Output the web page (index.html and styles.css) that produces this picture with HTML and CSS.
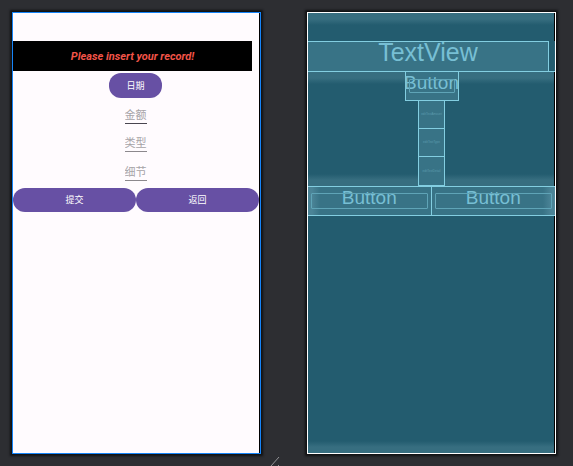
FILE: index.html
```html
<!DOCTYPE html>
<html lang="zh-CN">
<head>
<meta charset="utf-8">
<meta name="viewport" content="width=device-width, initial-scale=1">
<title>Layout editor</title>
<link rel="stylesheet" href="styles.css">
</head>
<body>
<main class="editor">
  <section class="device design" aria-label="Design">
    <h1 class="banner">Please insert your record!</h1>
    <form class="form">
      <button class="pill date" type="button">日期</button>
      <input class="field focus" type="text" placeholder="金额" aria-label="金额">
      <input class="field" type="text" placeholder="类型" aria-label="类型">
      <input class="field" type="text" placeholder="细节" aria-label="细节">
    </form>
    <div class="actions">
      <button class="pill" type="button">提交</button>
      <button class="pill" type="button">返回</button>
    </div>
  </section>
  <section class="device blueprint" aria-label="Blueprint">
    <div class="top-space"></div>
    <div class="banner-row"><div class="bp-title">TextView</div></div>
    <div class="bp-form">
      <div class="bp-button bp-date"><span>Button</span></div>
      <div class="bp-field">editTextAmount</div>
      <div class="bp-field">editTextType</div>
      <div class="bp-field">editTextDetail</div>
    </div>
    <div class="bp-actions">
      <div class="bp-button"><span>Button</span></div>
      <div class="bp-button"><span>Button</span></div>
    </div>
    <div class="bp-rest"></div>
  </section>
  <svg class="grip" viewBox="0 0 10 9" aria-hidden="true"><path d="M1 9L9 0M8 9L9 8"/></svg>
</main>
</body>
</html>
```
FILE: styles.css
```css
* { box-sizing: border-box; }

body {
  margin: 0;
  background: #2d2e32;
  font-family: Roboto, "Noto Sans CJK SC", sans-serif;
}

.editor {
  position: relative;
  display: grid;
  grid-template-columns: 1fr 1fr;
  gap: 46px;
  min-height: 100vh;
  padding: 12px 17px 12px 12px;
}

.device {
  display: flex;
  flex-direction: column;
  min-width: 0;
  box-shadow: 0 0 2px 2px #111214;
}

.design {
  padding-top: 28px;
  border: 1px solid #1684f8;
  background: linear-gradient(#000, #000) right / 1px 100% no-repeat, #fffbfe;
}

.banner {
  height: 30px;
  margin: 0 8px 0 0;
  background: #000;
  color: #f25448;
  font-size: 11px;
  font-style: italic;
  font-weight: 700;
  line-height: 31px;
  text-align: center;
}

.form {
  display: flex;
  flex-direction: column;
  align-items: center;
  padding: 2px 2px 0 0;
}

.pill {
  height: 24px;
  padding: 0;
  border: 0;
  border-radius: 12px;
  background: #6750a4;
  color: #fff;
  font: 400 9px/24px Roboto, "Noto Sans CJK SC", sans-serif;
}

.date {
  width: 53px;
  height: 25px;
  margin-bottom: 7px;
}

.field {
  width: 22px;
  height: 19px;
  margin-bottom: 9px;
  padding: 2px 0 0;
  border: 0;
  border-bottom: 1px solid #8c888d;
  outline: 0;
  background: none;
  color: #49454f;
  font: 11px/16px Roboto, "Noto Sans CJK SC", sans-serif;
}

.field::placeholder { color: #a6a3a7; opacity: 1; }
.focus { border-color: #49454f; }
.field:last-child { height: 20px; margin-bottom: 7px; padding-top: 3px; }

.actions {
  display: grid;
  grid-template-columns: 1fr 1fr;
  margin-right: 1px;
}

.blueprint {
  border: 1px solid #fff;
  background: #235c6f;
  color: #77bfd4;
  font-family: "Liberation Sans", sans-serif;
}

.top-space,
.bp-form,
.bp-rest {
  border-right: 1px solid #000;
}

.top-space {
  height: 28px;
  background: linear-gradient(#376e80 6px, #235c6f 12px);
}

.banner-row {
  height: 31px;
  border-bottom: 1px solid #83cee1;
}

.bp-title {
  height: 30px;
  margin-right: 6px;
  border: solid #83cee1;
  border-width: 1px 1px 0 0;
  background: #387386;
  font-size: 25px;
  line-height: 20px;
  text-align: center;
}

.bp-form {
  display: flex;
  flex-direction: column;
  align-items: center;
  padding-left: 1px;
  background: linear-gradient(#376e80 6px, #235c6f 12px, #235c6f calc(100% - 12px), #376e80 calc(100% - 6px));
}

.bp-button {
  position: relative;
  height: 30px;
  border: 1px solid #83cee1;
  border-top: 0;
  background: #387386;
  font-size: 19px;
  line-height: 21px;
  text-align: center;
}

.bp-button::before {
  content: "";
  position: absolute;
  inset: 7px 3px;
  border: 1px solid #5fa4b7;
  border-radius: 1px;
}

.bp-date {
  display: flex;
  justify-content: center;
  width: 54px;
  height: 29px;
}

.bp-field {
  width: 27px;
  border: 1px solid #83cee1;
  border-top: 0;
  background: #387386;
  color: #5c9bad;
  font-size: 3px;
  line-height: 27px;
  text-align: center;
}

.bp-field:last-child { line-height: 28px; }

.bp-actions {
  display: grid;
  grid-template-columns: 1fr 1fr;
  border-top: 1px solid #83cee1;
}

.bp-actions .bp-button { height: 29px; border-left: 0; }
.bp-actions .bp-button::before { inset: 6px 3px; }
.bp-actions .bp-button:first-child { background: linear-gradient(90deg, #4b8497 4px, #387386 12px); }
.bp-actions .bp-button:last-child { border-right: 0; background: linear-gradient(270deg, #4b8497 4px, #387386 12px); }

.bp-rest {
  flex: 1;
  background: linear-gradient(0deg, #376e80 6px, #235c6f 12px);
}

.grip {
  position: absolute;
  bottom: 0;
  left: 270px;
  width: 10px;
  height: 9px;
  fill: none;
  stroke: #929396;
  stroke-width: 1;
}
```
